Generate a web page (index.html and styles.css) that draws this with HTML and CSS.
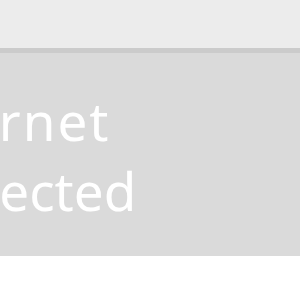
FILE: index.html
```html
<!DOCTYPE html>
<html>
<head>
<meta charset="utf-8">
<link rel="stylesheet" href="styles.css">
</head>
<body>
<div class="header"></div>
<div class="panel">
  <div class="line line-name">Internet</div>
  <div class="line line-status">Not connected</div>
</div>
<div class="footer"></div>
</body>
</html>
```
FILE: styles.css
```css
html, body {
  margin: 0;
  padding: 0;
  width: 300px;
  height: 300px;
  overflow: hidden;
  background: #ffffff;
}
.header {
  height: 48px;
  background: #ececec;
  border-bottom: 5px solid #cbcbcb;
}
.panel {
  height: 170px;
  padding-top: 33px;
  background: #dadada;
  overflow: hidden;
}
.line {
  font-family: "Noto Sans", "Liberation Sans", sans-serif;
  font-size: 53px;
  line-height: 70px;
  color: #ffffff;
  white-space: nowrap;
}
.line-name {
  margin-left: -109px;
  letter-spacing: 2px;
}
.line-status {
  margin-left: -229px;
}
.footer {
  height: 44px;
  background: #ffffff;
}
```
